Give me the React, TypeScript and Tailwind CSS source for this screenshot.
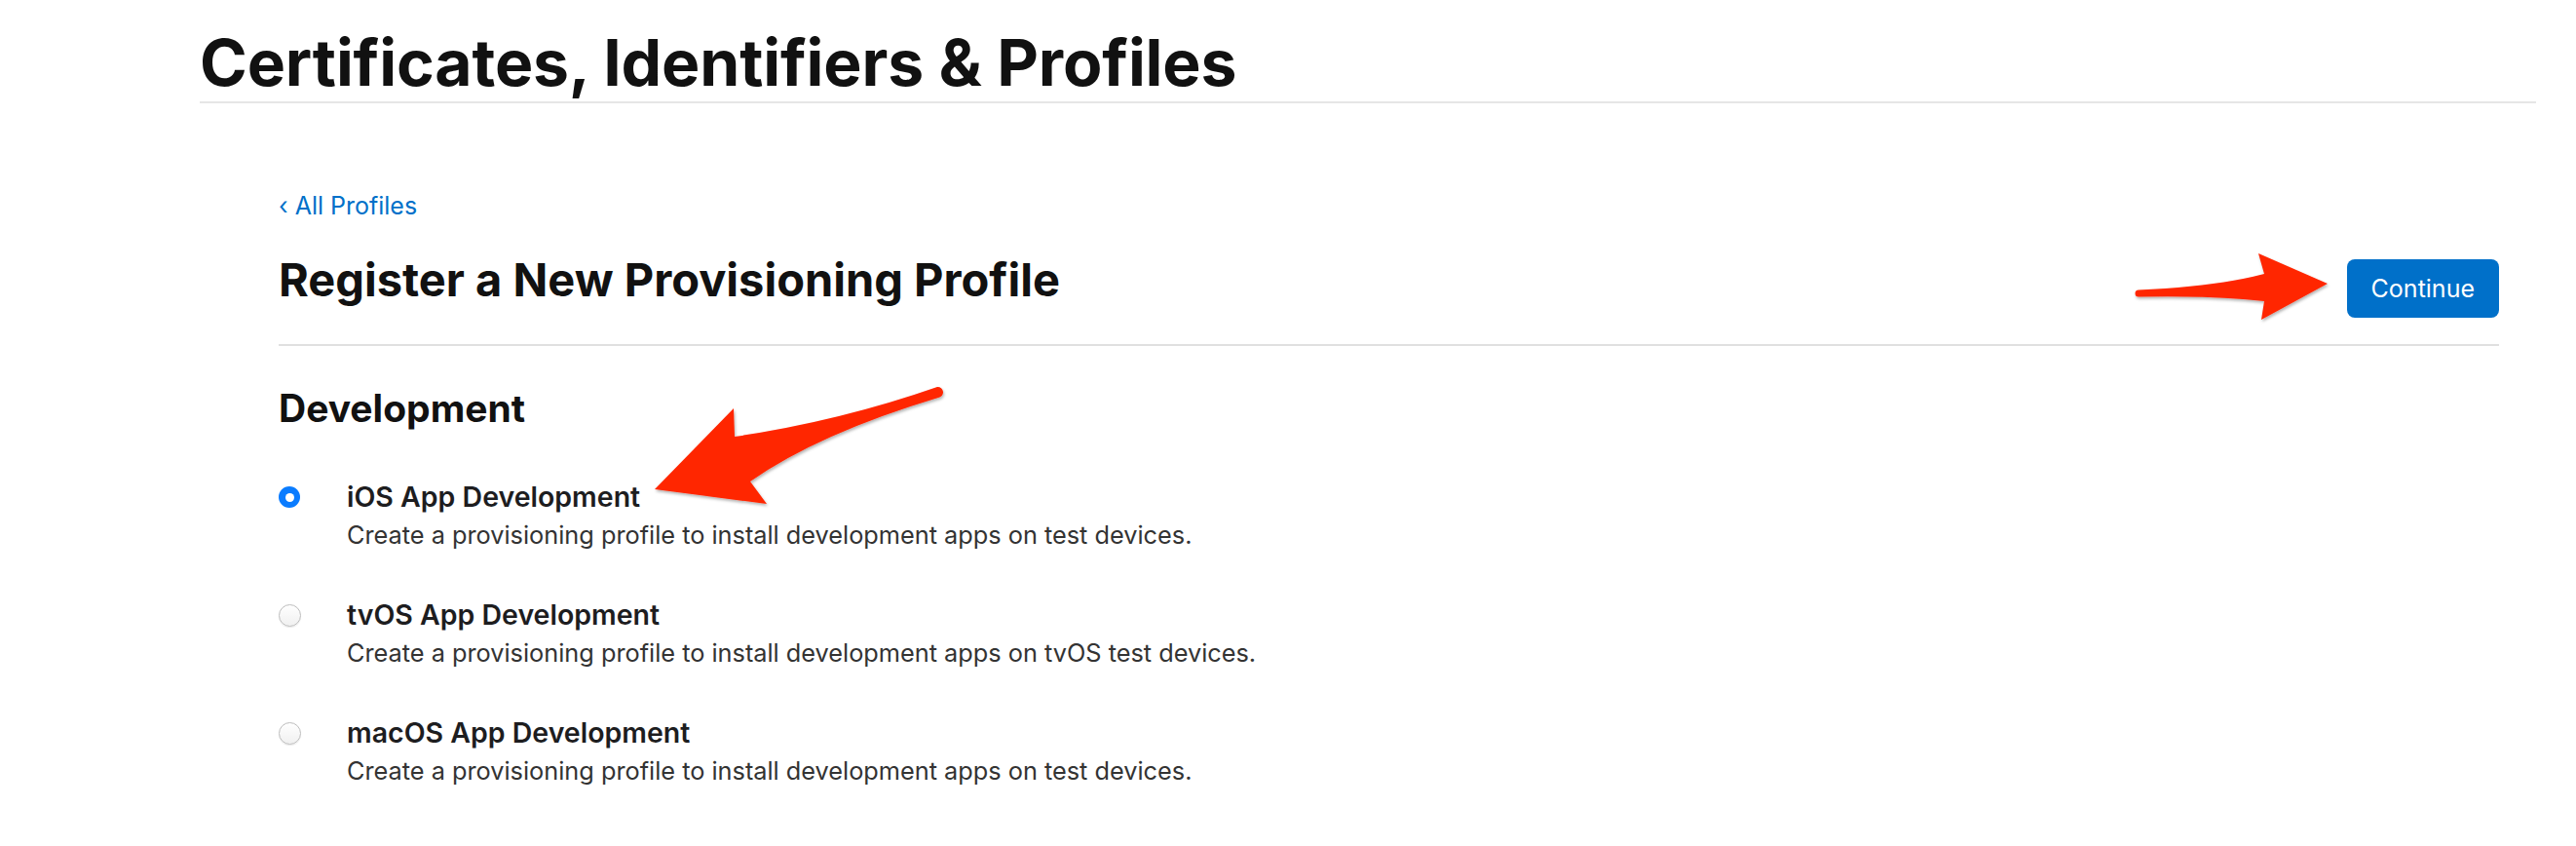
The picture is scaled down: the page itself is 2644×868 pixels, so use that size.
import React from 'react';

const options = [
    { id: 'ios', title: 'iOS App Development', desc: 'Create a provisioning profile to install development apps on test devices.', checked: true },
    { id: 'tvos', title: 'tvOS App Development', desc: 'Create a provisioning profile to install development apps on tvOS test devices.', checked: false },
    { id: 'macos', title: 'macOS App Development', desc: 'Create a provisioning profile to install development apps on test devices.', checked: false },
];

function Radio({ checked }: { checked: boolean }) {
    if (checked) {
        return (
            <div className="mt-[5px] w-[22px] h-[22px] rounded-full bg-[#0a7cff] flex items-center justify-center">
                <div className="w-[9px] h-[9px] rounded-full bg-white"></div>
            </div>
        );
    }
    return (
        <div className="mt-[5px] w-[23px] h-[23px] rounded-full border border-[#bdbdbd] bg-gradient-to-b from-white to-[#f0f0f0] shadow-[0_1px_1px_rgba(0,0,0,0.08)]"></div>
    );
}

// red annotation arrows drawn over the page
function Arrows() {
    return (
        <svg className="absolute inset-0 pointer-events-none" width="2644" height="868" viewBox="0 0 2644 868">
            <defs>
                <filter id="arrowShadow" x="-10%" y="-10%" width="120%" height="130%">
                    <feDropShadow dx="1" dy="2" stdDeviation="1.5" floodColor="#000" floodOpacity="0.3" />
                </filter>
            </defs>
            <path
                d="M2195,297.5 Q2275,294 2324,281 L2318,260 L2389,291 L2321,328 L2324,309 Q2272,303 2195,304.5 A3.5,3.5 0 0 1 2195,297.5 Z"
                fill="#ff2600"
                filter="url(#arrowShadow)"
            />
            <path
                d="M962,397 Q862,432 754,448 L753,419 L672,502 L787,517 L770,494 Q840,445 963,408 A5.5,5.5 0 0 0 962,397 Z"
                fill="#ff2600"
                filter="url(#arrowShadow)"
            />
        </svg>
    );
}

export default function App() {
    return (
        <div className="relative w-[2644px] h-[868px] bg-white overflow-hidden font-['Inter','Noto_Sans',sans-serif] text-[#111]">
            <header className="ml-[205px] w-[2398px] pt-[30px] pb-[6px] border-b-2 border-[#e6e6e6]">
                <h1 className="text-[66px] leading-[68px] font-bold tracking-[-0.15px]">Certificates, Identifiers &amp; Profiles</h1>
            </header>

            <main className="ml-[286px] w-[2279px]">
                <a className="block mt-[89px] text-[25px] leading-[32px] text-[#0070c9]">‹ All Profiles</a>

                <div className="mt-[32px] flex justify-between items-start pb-[27px] border-b-2 border-[#e0e0e0]">
                    <h2 className="text-[47px] leading-[56px] font-bold">Register a New Provisioning Profile</h2>
                    <button className="mt-[7px] h-[60px] px-[25px] rounded-[8px] bg-[#0070c9] text-white text-[25px] leading-[32px]">
                        Continue
                    </button>
                </div>

                <h3 className="mt-[42px] text-[39px] leading-[44px] font-bold">Development</h3>

                <div className="mt-[53px] flex flex-col gap-[50px]">
                    {options.map(opt => (
                        <div key={opt.id} className="grid grid-cols-[70px_1fr]">
                            <Radio checked={opt.checked} />
                            <div>
                                <div className="text-[28.5px] leading-[32px] font-semibold text-[#1d1d1f]">{opt.title}</div>
                                <div className="mt-[7px] text-[25.3px] leading-[32px] text-[#333]">{opt.desc}</div>
                            </div>
                        </div>
                    ))}
                </div>
            </main>

            <Arrows />
        </div>
    );
}
